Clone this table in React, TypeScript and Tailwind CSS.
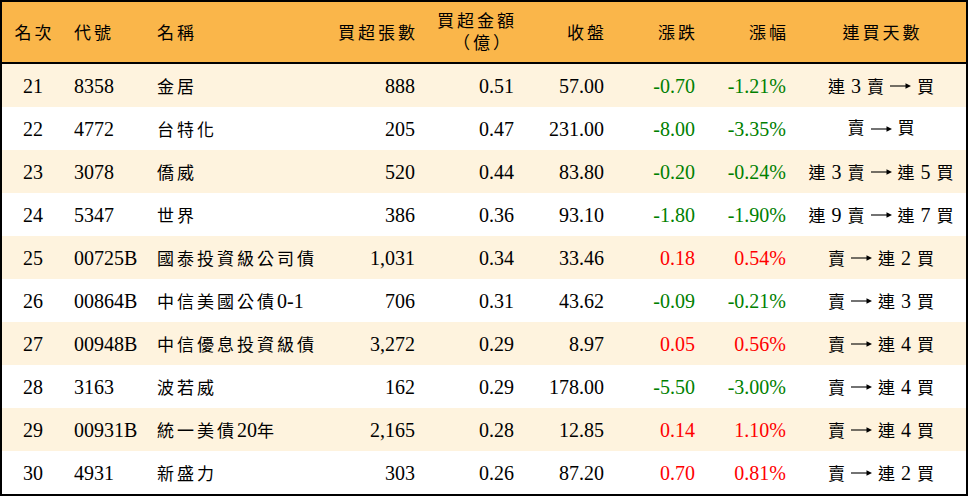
import React from 'react'

type Row = {
  rank: number
  code: string
  name: string
  lots: string
  amount: string
  close: string
  change: string
  pct: string
  days: string
}

const ROWS: Row[] = [
  { rank: 21, code: '8358', name: '金居', lots: '888', amount: '0.51', close: '57.00', change: '-0.70', pct: '-1.21%', days: '連3賣→買' },
  { rank: 22, code: '4772', name: '台特化', lots: '205', amount: '0.47', close: '231.00', change: '-8.00', pct: '-3.35%', days: '賣→買' },
  { rank: 23, code: '3078', name: '僑威', lots: '520', amount: '0.44', close: '83.80', change: '-0.20', pct: '-0.24%', days: '連3賣→連5買' },
  { rank: 24, code: '5347', name: '世界', lots: '386', amount: '0.36', close: '93.10', change: '-1.80', pct: '-1.90%', days: '連9賣→連7買' },
  { rank: 25, code: '00725B', name: '國泰投資級公司債', lots: '1,031', amount: '0.34', close: '33.46', change: '0.18', pct: '0.54%', days: '賣→連2買' },
  { rank: 26, code: '00864B', name: '中信美國公債0-1', lots: '706', amount: '0.31', close: '43.62', change: '-0.09', pct: '-0.21%', days: '賣→連3買' },
  { rank: 27, code: '00948B', name: '中信優息投資級債', lots: '3,272', amount: '0.29', close: '8.97', change: '0.05', pct: '0.56%', days: '賣→連4買' },
  { rank: 28, code: '3163', name: '波若威', lots: '162', amount: '0.29', close: '178.00', change: '-5.50', pct: '-3.00%', days: '賣→連4買' },
  { rank: 29, code: '00931B', name: '統一美債20年', lots: '2,165', amount: '0.28', close: '12.85', change: '0.14', pct: '1.10%', days: '賣→連4買' },
  { rank: 30, code: '4931', name: '新盛力', lots: '303', amount: '0.26', close: '87.20', change: '0.70', pct: '0.81%', days: '賣→連2買' },
]

const CJK = /([\u3000-\u303f\u4e00-\u9fff\uff00-\uffef]+)/

// CJK runs are set smaller with tracking, digits stay in the serif face
function Txt({ s }: { s: string }) {
  return (
    <>
      {s.split(CJK).map((part, i) =>
        i % 2 === 1 ? (
          <span key={i} className="text-[17px] tracking-[3px]">{part}</span>
        ) : (
          <React.Fragment key={i}>{part}</React.Fragment>
        )
      )}
    </>
  )
}

function Arrow() {
  return (
    <svg width="21" height="10" viewBox="0 0 21 10" className="self-center shrink-0">
      <line x1="0" y1="5" x2="17" y2="5" stroke="currentColor" strokeWidth="1.1" />
      <path d="M15.5 2.3 L21 5 L15.5 7.7 Z" fill="currentColor" />
    </svg>
  )
}

function Days({ s }: { s: string }) {
  return (
    <div className="flex items-baseline justify-center gap-[6px]">
      {Array.from(s).map((ch, i) =>
        ch === '→' ? (
          <Arrow key={i} />
        ) : (
          <span key={i} className={CJK.test(ch) ? 'text-[17px]' : 'text-[20px]'}>{ch}</span>
        )
      )}
    </div>
  )
}

const C0 = 'w-[62px] shrink-0 text-center'
const C1 = 'w-[82px] shrink-0 pl-[10px]'
const C2 = 'w-[174px] shrink-0 pl-[11px] whitespace-nowrap'
const C3 = 'w-[105px] shrink-0 text-right'
const C4 = 'w-[99px] shrink-0 text-right'
const C5 = 'w-[90px] shrink-0 text-right'
const C6 = 'w-[91px] shrink-0 text-right'
const C7 = 'w-[91px] shrink-0 text-right'
const C8 = 'w-[170px] shrink-0'

export default function App() {
  return (
    <div className="w-[968px] h-[496px] border-2 border-black bg-white text-black font-['Liberation_Serif','Noto_Sans_CJK_TC',serif] text-[20px] leading-none">
      <div className="flex h-[62px] items-center bg-[#FAB64A] border-b-2 border-black">
        <div className={`${C0} pl-[3px]`}><Txt s="名次" /></div>
        <div className={C1}><Txt s="代號" /></div>
        <div className={C2}><Txt s="名稱" /></div>
        <div className={`${C3} pr-[7px]`}><Txt s="買超張數" /></div>
        <div className={`${C4} pr-[7px] flex flex-col items-end leading-[20px]`}>
          <div><Txt s="買超金額" /></div>
          <div className="pr-[4px]"><Txt s="（億）" /></div>
        </div>
        <div className={`${C5} pr-[7px]`}><Txt s="收盤" /></div>
        <div className={`${C6} pr-[7px]`}><Txt s="漲跌" /></div>
        <div className={`${C7} pr-[7px]`}><Txt s="漲幅" /></div>
        <div className={`${C8} text-center pl-[3px]`}><Txt s="連買天數" /></div>
      </div>

      {ROWS.map((r, i) => {
        const up = !r.change.startsWith('-')
        const tone = up ? 'text-[#FF0000]' : 'text-[#008000]'
        return (
          <div key={r.rank} className={`flex h-[43px] items-center ${i % 2 === 0 ? 'bg-[#FEF3DE]' : 'bg-white'}`}>
            <div className={C0}>{r.rank}</div>
            <div className={C1}>{r.code}</div>
            <div className={C2}><Txt s={r.name} /></div>
            <div className={`${C3} pr-[10px]`}>{r.lots}</div>
            <div className={`${C4} pr-[10px]`}>{r.amount}</div>
            <div className={`${C5} pr-[10px]`}>{r.close}</div>
            <div className={`${C6} pr-[10px] ${tone}`}>{r.change}</div>
            <div className={`${C7} pr-[10px] ${tone}`}>{r.pct}</div>
            <div className={C8}><Days s={r.days} /></div>
          </div>
        )
      })}
    </div>
  )
}
